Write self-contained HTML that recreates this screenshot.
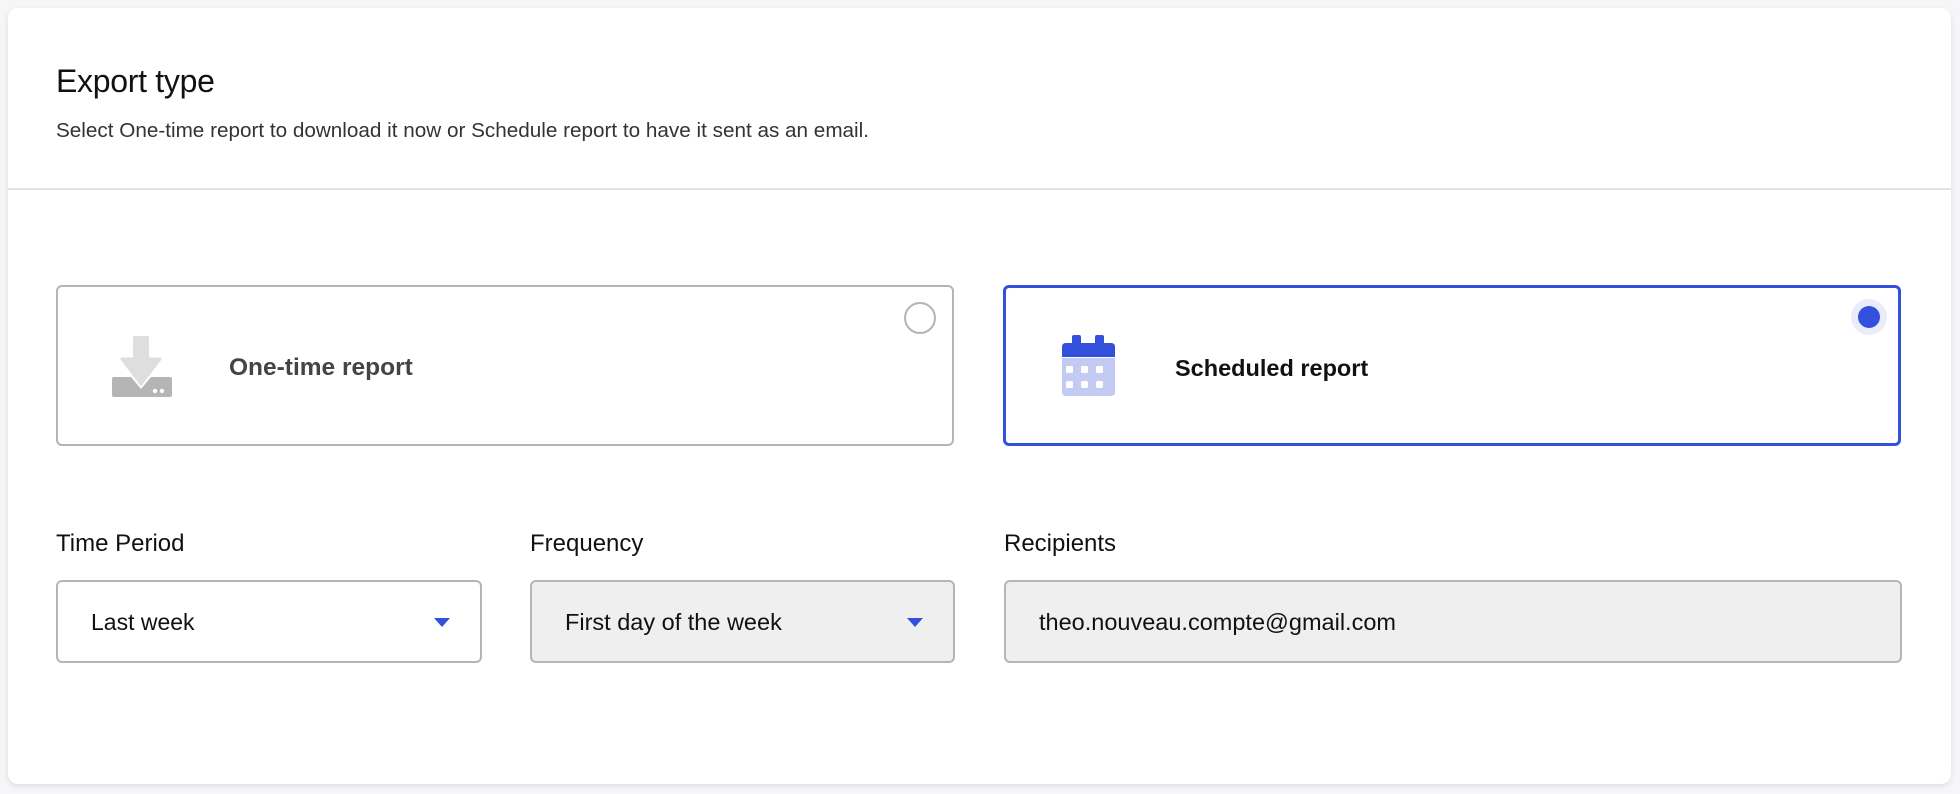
<!DOCTYPE html>
<html><head><meta charset="utf-8"><style>
*{box-sizing:border-box;margin:0;padding:0}
body{width:1960px;height:794px;background:#f6f6f8;font-family:"Liberation Sans",sans-serif;color:#111;position:relative;overflow:hidden}
.card{position:absolute;left:8px;top:8px;width:1943px;height:776px;background:#fff;border-radius:10px;box-shadow:0 2px 6px rgba(0,0,0,.1)}
.a{position:absolute;white-space:nowrap}
.opt{position:absolute;top:285px;height:161px;width:898px;border-radius:6px;background:#fff}
.lbl{font-size:24px;top:530px;color:#111}
.inp{position:absolute;top:580px;height:83px;border:2px solid #b5b5b5;border-radius:6px}
.inp span{position:absolute;left:33px;top:27px;font-size:23px;color:#111}
.arr{position:absolute;width:0;height:0;border-left:8px solid transparent;border-right:8px solid transparent;border-top:9px solid #3350dc;top:36px}
</style></head><body>
<div class="card"></div>
<div class="a" style="left:56px;top:63px;font-size:32px;letter-spacing:-0.3px">Export type</div>
<div class="a" style="left:56px;top:119px;font-size:20.7px;color:#333">Select One-time report to download it now or Schedule report to have it sent as an email.</div>
<div class="a" style="left:8px;top:188px;width:1943px;height:2px;background:#e2e2e4"></div>

<div class="opt" style="left:56px;border:2px solid #b5b5b5"></div>
<svg class="a" style="left:105px;top:330px" width="75" height="75" viewBox="105 330 75 75">
<rect x="133" y="336" width="16" height="26" rx="2" fill="#dedede"/>
<path d="M122 359 L160 359 L141 384 Z" fill="#dedede" stroke="#dedede" stroke-width="3" stroke-linejoin="round"/>
<path d="M114 377 L131 377 L141 389 L151 377 L170 377 Q172 377 172 379 L172 395 Q172 397 170 397 L114 397 Q112 397 112 395 L112 379 Q112 377 114 377Z" fill="#b5b5b5"/>
<circle cx="155" cy="391" r="2.2" fill="#fff"/><circle cx="162" cy="391" r="2.2" fill="#fff"/>
</svg>
<div class="a" style="left:229px;top:354px;font-size:24.5px;font-weight:bold;color:#444">One-time report</div>
<div class="a" style="left:904px;top:302px;width:32px;height:32px;border-radius:50%;border:2px solid #b5b5b5"></div>

<div class="opt" style="left:1003px;border:3px solid #3350dc"></div>
<svg class="a" style="left:1055px;top:330px" width="70" height="75" viewBox="1055 330 70 75">
<rect x="1072" y="335" width="9" height="12" rx="2" fill="#3350dc"/>
<rect x="1095" y="335" width="9" height="12" rx="2" fill="#3350dc"/>
<path d="M1066 343 H1111 Q1115 343 1115 347 V357 H1062 V347 Q1062 343 1066 343Z" fill="#3350dc"/>
<path d="M1062 358 H1115 V392 Q1115 396 1111 396 H1066 Q1062 396 1062 392Z" fill="#c4cbf3"/>
<g fill="#fff"><rect x="1066" y="366" width="7" height="7" rx="1.5"/><rect x="1081" y="366" width="7" height="7" rx="1.5"/><rect x="1096" y="366" width="7" height="7" rx="1.5"/>
<rect x="1066" y="381" width="7" height="7" rx="1.5"/><rect x="1081" y="381" width="7" height="7" rx="1.5"/><rect x="1096" y="381" width="7" height="7" rx="1.5"/></g>
</svg>
<div class="a" style="left:1175px;top:355px;font-size:23.5px;font-weight:bold;color:#111">Scheduled report</div>
<div class="a" style="left:1851px;top:299px;width:36px;height:36px;border-radius:50%;background:#e9ecfb"></div>
<div class="a" style="left:1858px;top:306px;width:22px;height:22px;border-radius:50%;background:#3350dc"></div>

<div class="a lbl" style="left:56px">Time Period</div>
<div class="a lbl" style="left:530px">Frequency</div>
<div class="a lbl" style="left:1004px">Recipients</div>

<div class="inp" style="left:56px;width:426px;background:#fff"><span>Last week</span><div class="arr" style="left:376px"></div></div>
<div class="inp" style="left:530px;width:425px;background:#efefef"><span style="font-size:23.5px">First day of the week</span><div class="arr" style="left:375px"></div></div>
<div class="inp" style="left:1004px;width:898px;background:#efefef"><span style="font-size:23.5px">theo.nouveau.compte@gmail.com</span></div>
</body></html>
